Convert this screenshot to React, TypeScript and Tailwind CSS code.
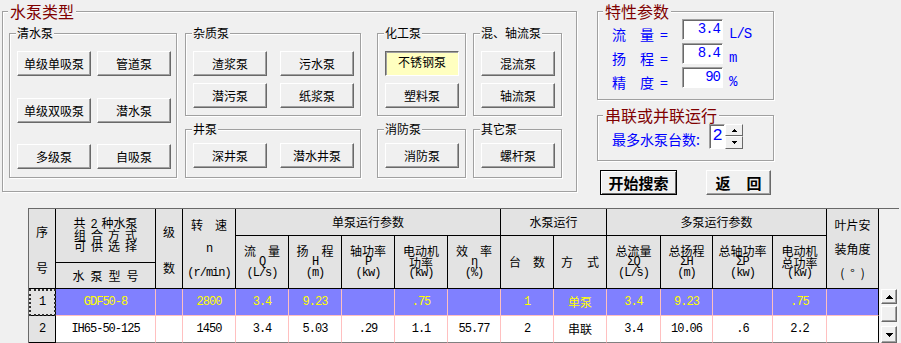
import { Fragment, type ReactNode } from "react";

const mono = "font-['Liberation_Mono','Noto_Sans_CJK_SC',monospace] tracking-[-1px]";
const head = "bg-[#e3e3e3] border-r border-b border-black flex flex-col items-center";

function GroupBox({ title, big, className, children }: { title: string; big?: boolean; className: string; children: ReactNode }) {
    return (
        <div className={`relative border border-[#a0a0a0] shadow-[inset_1px_1px_0_#fff,1px_1px_0_#fff] ${className}`}>
            {big ? (
                <span className="absolute left-[5px] top-[-10px] px-[2px] bg-[#f0f0f0] text-[16px] leading-[18px] text-[#800000]">{title}</span>
            ) : (
                <span className="absolute left-[6px] top-[-8px] px-[1px] bg-[#f0f0f0] text-[12px] leading-[14px] text-black">{title}</span>
            )}
            {children}
        </div>
    );
}

function Btn({ children, pressed }: { children: ReactNode; pressed?: boolean }) {
    if (pressed) {
        return (
            <button className="w-[74px] h-[25px] pb-[4px] bg-[#ffffc0] border border-t-[#696969] border-l-[#696969] border-b-white border-r-white shadow-[inset_1px_1px_0_#a0a0a0] text-[12px] leading-none text-black">
                {children}
            </button>
        );
    }
    return (
        <button className="w-[74px] h-[25px] bg-[#f0f0f0] border border-t-white border-l-white border-b-[#696969] border-r-[#696969] shadow-[inset_-1px_-1px_0_#a0a0a0] text-[12px] leading-none text-black">
            {children}
        </button>
    );
}

// characters laid out with a fixed gap
function Sp({ t, gap }: { t: string; gap: string }) {
    return (
        <span className={`flex ${gap}`}>
            {[...t].map((c, i) => <span key={i}>{c}</span>)}
        </span>
    );
}

function Arrow({ down, small }: { down?: boolean; small?: boolean }) {
    return small ? (
        <svg width="5" height="3" className={down ? "rotate-180" : ""} shapeRendering="crispEdges">
            <path d="M2 0h1v1h1v1h1v1H0V2h1V1h1z" fill="#000" />
        </svg>
    ) : (
        <svg width="7" height="4" className={down ? "rotate-180" : ""} shapeRendering="crispEdges">
            <path d="M3 0h1v1h1v1h1v1h1v1H0V3h1V2h1V1h1z" fill="#000" />
        </svg>
    );
}

function PumpTypes() {
    return (
        <GroupBox big title="水泵类型" className="ml-[2px] mt-[11px] w-[575px] h-[181px] pl-[6px] pt-[21px] flex items-start">
            <GroupBox title="清水泵" className="w-[168px] h-[145px] pl-[7px] pt-[17px]">
                <div className="flex gap-[6px]"><Btn>单级单吸泵</Btn><Btn>管道泵</Btn></div>
                <div className="flex gap-[6px] mt-[22px]"><Btn>单级双吸泵</Btn><Btn>潜水泵</Btn></div>
                <div className="flex gap-[6px] mt-[21px]"><Btn>多级泵</Btn><Btn>自吸泵</Btn></div>
            </GroupBox>
            <div className="ml-[8px] flex flex-col">
                <GroupBox title="杂质泵" className="w-[176px] h-[83px] pl-[7px] pt-[17px]">
                    <div className="flex gap-[13px]"><Btn>渣浆泵</Btn><Btn>污水泵</Btn></div>
                    <div className="flex gap-[13px] mt-[7px]"><Btn>潜污泵</Btn><Btn>纸浆泵</Btn></div>
                </GroupBox>
                <GroupBox title="井泵" className="mt-[13px] w-[176px] h-[49px] pl-[7px] pt-[13px]">
                    <div className="flex gap-[13px]"><Btn>深井泵</Btn><Btn>潜水井泵</Btn></div>
                </GroupBox>
            </div>
            <div className="ml-[16px] flex flex-col">
                <GroupBox title="化工泵" className="w-[89px] h-[83px] pl-[7px] pt-[17px]">
                    <Btn pressed>不锈钢泵</Btn>
                    <div className="mt-[7px]"><Btn>塑料泵</Btn></div>
                </GroupBox>
                <GroupBox title="消防泵" className="mt-[13px] w-[89px] h-[49px] pl-[7px] pt-[13px]">
                    <Btn>消防泵</Btn>
                </GroupBox>
            </div>
            <div className="ml-[7px] flex flex-col">
                <GroupBox title="混、轴流泵" className="w-[89px] h-[83px] pl-[7px] pt-[17px]">
                    <Btn>混流泵</Btn>
                    <div className="mt-[7px]"><Btn>轴流泵</Btn></div>
                </GroupBox>
                <GroupBox title="其它泵" className="mt-[13px] w-[89px] h-[49px] pl-[7px] pt-[13px]">
                    <Btn>螺杆泵</Btn>
                </GroupBox>
            </div>
        </GroupBox>
    );
}

const params = [
    ["流", "量", "3.4", "L/S"],
    ["扬", "程", "8.4", "m"],
    ["精", "度", "90", "%"],
];

function SidePanel() {
    return (
        <div className="ml-[20px] mt-[11px] flex flex-col">
            <GroupBox big title="特性参数" className="w-[177px] h-[89px] pl-[14px] pt-[7px] text-[#0000ff]">
                {params.map(([a, b, v, u], i) => (
                    <div key={i} className={`flex items-start h-[21px] ${i ? "mt-[3px]" : ""}`}>
                        <span className="w-[28px] mt-[7px] text-[14px] leading-[16px]">{a}</span>
                        <span className="w-[20px] mt-[7px] text-[14px] leading-[16px]">{b}</span>
                        <span className="w-[22px] mt-[7px] text-[14px] leading-[16px]">=</span>
                        <span className={`w-[41px] h-[21px] pr-[2px] bg-white border border-t-[#a0a0a0] border-l-[#a0a0a0] border-b-white border-r-white shadow-[inset_1px_1px_0_#696969] text-right text-[14px] leading-[19px] ${mono}`}>{v}</span>
                        <span className={`ml-[6px] mt-[7px] text-[14px] leading-[16px] ${mono}`}>{u}</span>
                    </div>
                ))}
            </GroupBox>
            <GroupBox big title="串联或并联运行" className="mt-[15px] w-[177px] h-[46px] pl-[14px] pt-[8px] flex items-start text-[#0000ff]">
                <span className="w-[97px] mt-[7px] text-[14px] leading-[16px]">最多水泵台数:</span>
                <span className={`w-[16px] h-[25px] bg-white border border-t-[#a0a0a0] border-l-[#a0a0a0] border-b-white border-r-white shadow-[inset_1px_1px_0_#696969] text-center text-[17px] leading-[22px] ${mono}`}>2</span>
                <div className="flex flex-col w-[18px]">
                    <span className="h-[12px] flex items-center justify-center bg-[#f0f0f0] border border-t-white border-l-white border-b-[#696969] border-r-[#696969]"><Arrow small /></span>
                    <span className="h-[13px] flex items-center justify-center bg-[#f0f0f0] border border-t-white border-l-white border-b-[#696969] border-r-[#696969]"><Arrow small down /></span>
                </div>
            </GroupBox>
            <div className="flex mt-[9px]">
                <button className="ml-[3px] w-[77px] h-[25px] bg-[#f0f0f0] border border-black shadow-[inset_1px_1px_0_#fff,inset_-1px_-1px_0_#696969] text-[15px] leading-none font-bold text-black">
                    开始搜索
                </button>
                <button className="ml-[29px] w-[65px] h-[25px] bg-[#f0f0f0] border border-t-white border-l-white border-b-[#696969] border-r-[#696969] shadow-[inset_-1px_-1px_0_#a0a0a0] flex items-center justify-center text-[15px] leading-none font-bold text-black">
                    <Sp t="返回" gap="gap-[16px]" />
                </button>
            </div>
        </div>
    );
}

// three stacked lines in a sub header: name, symbol, unit
function Sub({ a, b, c }: { a: ReactNode; b: ReactNode; c: string }) {
    return (
        <div className={`row-span-2 ${head} pt-[9px]`}>
            <span className="h-[11.5px] leading-[11.5px] flex">{a}</span>
            <span className={`h-[11.5px] leading-[11.5px] ${mono}`}>{b}</span>
            <span className={`h-[11.5px] leading-[11.5px] ${mono}`}>{c}</span>
        </div>
    );
}

const rows = [
    ["GDF50-8", "", "2800", "3.4", "9.23", "", ".75", "", "1", "单泵", "3.4", "9.23", "", ".75", ""],
    ["IH65-50-125", "", "1450", "3.4", "5.03", ".29", "1.1", "55.77", "2", "串联", "3.4", "10.06", ".6", "2.2", ""],
];

function ResultTable() {
    return (
        <div className="mt-[13px] ml-[28px] w-[871px] h-[135px] border-t border-l border-[#696969] flex">
            <div className="grid grid-cols-[27px_100px_27px_53px_53px_53px_53px_53px_53px_53px_53px_54px_52px_60px_54px_52px] grid-rows-[27px_27px_26px_27px_27px] text-[12px] leading-[12px]">
                <div className={`row-span-3 ${head} pt-[17px] gap-[24px]`}><span>序</span><span>号</span></div>
                <div className={`row-span-2 ${head} pt-[8px]`}>
                    <div className="flex items-baseline h-[11.5px] leading-[11.5px]">
                        <span>共</span>
                        <span className={`mx-[5px] ${mono}`}>2</span>
                        <span>种水泵</span>
                    </div>
                    <span className="h-[11.5px] leading-[11.5px]"><Sp t="组合方式" gap="gap-[5px]" /></span>
                    <span className="h-[11.5px] leading-[11.5px]"><Sp t="可供选择" gap="gap-[5px]" /></span>
                </div>
                <div className={`row-span-3 ${head} pt-[17px] gap-[24px]`}><span>级</span><span>数</span></div>
                <div className={`row-span-3 ${head} pt-[10px] gap-[12px]`}>
                    <Sp t="转速" gap="gap-[12px]" />
                    <span className={mono}>n</span>
                    <span className={mono}>(r/min)</span>
                </div>
                <div className={`col-span-5 ${head} justify-center`}>单泵运行参数</div>
                <div className={`col-span-2 ${head} justify-center`}>水泵运行</div>
                <div className={`col-span-4 ${head} justify-center`}>多泵运行参数</div>
                <div className={`row-span-3 ${head} pt-[10px] gap-[12px]`}>
                    <span>叶片安</span>
                    <span>装角度</span>
                    <Sp t="(°)" gap="gap-[6px]" />
                </div>

                <Sub a={<Sp t="流量" gap="gap-[12px]" />} b="Q" c="(L/s)" />
                <Sub a={<Sp t="扬程" gap="gap-[13px]" />} b="H" c="(m)" />
                <Sub a="轴功率" b="P" c="(kw)" />
                <div className={`row-span-2 ${head} pt-[9px]`}>
                    <span className="h-[11.5px] leading-[11.5px]">电动机</span>
                    <span className="h-[11.5px] leading-[11.5px]">功率</span>
                    <span className={`h-[11.5px] leading-[11.5px] ${mono}`}>(kw)</span>
                </div>
                <Sub a={<Sp t="效率" gap="gap-[12px]" />} b="η" c="(%)" />
                <div className={`row-span-2 ${head} justify-center`}><Sp t="台数" gap="gap-[12px]" /></div>
                <div className={`row-span-2 ${head} justify-center`}><Sp t="方式" gap="gap-[14px]" /></div>
                <Sub a="总流量" b="ΣQ" c="(L/s)" />
                <Sub a="总扬程" b="ΣH" c="(m)" />
                <Sub a="总轴功率" b="ΣP" c="(kw)" />
                <div className={`row-span-2 ${head} pt-[9px]`}>
                    <span className="h-[11.5px] leading-[11.5px]">电动机</span>
                    <span className="h-[11.5px] leading-[11.5px]">总功率</span>
                    <span className={`h-[11.5px] leading-[11.5px] ${mono}`}>(kw)</span>
                </div>

                <div className={`${head} justify-center`}><Sp t="水泵型号" gap="gap-[6px]" /></div>

                {rows.map((row, r) => (
                    <Fragment key={r}>
                        <div className={`bg-[#e3e3e3] border-r border-b border-black flex items-center justify-center ${mono} ${r === 0 ? "outline-2 outline-dotted outline-[#303030] -outline-offset-2" : ""}`}>
                            {r + 1}
                        </div>
                        {row.map((v, c) => (
                            <div
                                key={c}
                                className={`flex items-center justify-center border-r border-b ${c === row.length - 1 ? "border-r-black" : "border-r-[#ffc0c0]"} ${r === 0 ? "bg-[#8080ff] text-[#ffff00] border-b-[#ffc0c0]" : "bg-white text-black border-b-[#808080]"} ${/[\u4e00-\u9fff]/.test(v) ? "" : mono}`}
                            >
                                {v}
                            </div>
                        ))}
                    </Fragment>
                ))}
            </div>

            {/* vertical scrollbar */}
            <div className="w-[20px] flex flex-col">
                <div className="h-[80px] bg-[#f0f0f0]" />
                <div className="flex-1 pl-[2px] flex flex-col bg-[#f5f5f5]">
                    <span className="w-[16px] h-[15px] flex items-center justify-center bg-[#f0f0f0] border border-t-white border-l-white border-b-[#696969] border-r-[#696969] shadow-[inset_-1px_-1px_0_#a0a0a0]"><Arrow /></span>
                    <span className="mt-[2px] w-[16px] h-[16px] bg-[#f0f0f0] border border-t-white border-l-white border-b-[#696969] border-r-[#696969] shadow-[inset_-1px_-1px_0_#a0a0a0]" />
                    <span className="mt-[4px] w-[16px] h-[17px] flex items-center justify-center bg-[#f0f0f0] border border-t-white border-l-white border-b-[#696969] border-r-[#696969] shadow-[inset_-1px_-1px_0_#a0a0a0]"><Arrow down /></span>
                </div>
            </div>
        </div>
    );
}

export default function App() {
    return (
        <div className="w-[901px] h-[343px] overflow-hidden bg-[#f0f0f0] font-['Noto_Sans_CJK_SC',sans-serif] text-[12px] text-black">
            <div className="flex items-start h-[195px]">
                <PumpTypes />
                <SidePanel />
            </div>
            <ResultTable />
        </div>
    );
}
